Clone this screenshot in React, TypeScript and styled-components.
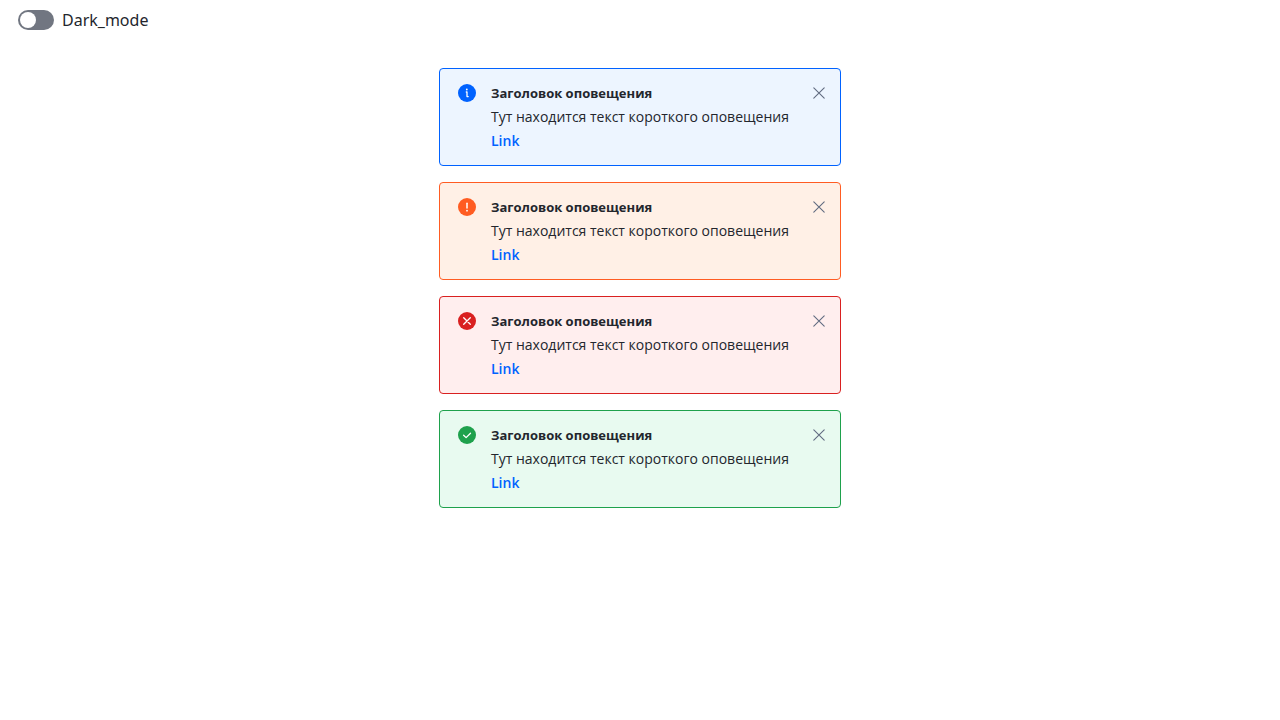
import React, { useState } from "react";
import styled, { createGlobalStyle } from "styled-components";

const GlobalStyle = createGlobalStyle<{ $dark: boolean }>`
  body {
    margin: 0;
    background: ${(p) => (p.$dark ? "#1f232e" : "#ffffff")};
    color: ${(p) => (p.$dark ? "#ffffff" : "#23262d")};
    font-family: "Noto Sans", sans-serif;
  }
`;

const Page = styled.main`
  padding: 8px 18px;
`;

const SwitchLabel = styled.label`
  display: flex;
  align-items: center;
  gap: 8px;
  width: fit-content;
  font-size: 16px;
  line-height: 24px;
  cursor: pointer;
`;

const Switch = styled.input`
  appearance: none;
  display: flex;
  align-items: center;
  box-sizing: border-box;
  width: 36px;
  height: 20px;
  margin: 0;
  padding: 2px;
  border-radius: 10px;
  background: #717681;
  cursor: pointer;

  &::before {
    content: "";
    width: 16px;
    height: 16px;
    border-radius: 50%;
    background: #ffffff;
  }

  &:checked {
    justify-content: flex-end;
    background: #0062ff;
  }
`;

const AlertList = styled.section`
  display: flex;
  flex-direction: column;
  gap: 16px;
  max-width: 402px;
  margin: 36px auto 0;
`;

const Alert = styled.article<{ $color: string; $background: string }>`
  display: flex;
  align-items: flex-start;
  gap: 12px;
  padding: 12px 9px 12px 15px;
  border: 1px solid ${(p) => p.$color};
  border-radius: 4px;
  background: ${(p) => p.$background};
  color: #23262d;
`;

const StatusIcon = styled.svg`
  flex: none;
  width: 24px;
  height: 24px;
`;

const AlertBody = styled.div`
  flex: 1;
  font-family: "Open Sans", "Noto Sans", sans-serif;
  font-size: 14px;
  line-height: 24px;
`;

const AlertTitle = styled.h2`
  margin: 0;
  font-size: 13px;
  font-weight: 700;
`;

const AlertText = styled.p`
  margin: 0;
`;

const AlertLink = styled.a`
  display: block;
  width: fit-content;
  color: #0062ff;
  font-weight: 600;
  text-decoration: none;
`;

const CloseButton = styled.button`
  display: flex;
  width: 24px;
  height: 24px;
  padding: 0;
  border: 0;
  background: none;
  color: #616b80;
  cursor: pointer;
`;

const white = { fill: "none", stroke: "#ffffff", strokeLinecap: "round", strokeLinejoin: "round" } as const;

const alerts = [
  {
    kind: "info",
    color: "#0062ff",
    background: "#edf5ff",
    glyph: (
      <>
        <circle cx="11.8" cy="8.5" r="0.9" fill="#ffffff" />
        <path d="M11.3 11h0.7v4.6h1.2" {...white} strokeWidth="1.3" />
      </>
    ),
  },
  {
    kind: "warning",
    color: "#ff5c22",
    background: "#fff0e6",
    glyph: (
      <>
        <path d="M12 8.2v4.8" {...white} strokeWidth="1.5" />
        <circle cx="12" cy="15.7" r="0.9" fill="#ffffff" />
      </>
    ),
  },
  {
    kind: "error",
    color: "#d92020",
    background: "#ffeeee",
    glyph: <path d="m8.7 8.7 6.6 6.6m0-6.6-6.6 6.6" {...white} strokeWidth="1.3" />,
  },
  {
    kind: "success",
    color: "#1ea14c",
    background: "#e8faf0",
    glyph: <path d="m8.6 12.2 2.5 2.4 4.4-4.4" {...white} strokeWidth="1.3" />,
  },
];

export default function App() {
  const [dark, setDark] = useState(false);
  const [closed, setClosed] = useState<string[]>([]);

  return (
    <Page>
      <GlobalStyle $dark={dark} />
      <SwitchLabel>
        <Switch type="checkbox" role="switch" checked={dark} onChange={() => setDark(!dark)} />
        Dark_mode
      </SwitchLabel>
      <AlertList>
        {alerts
          .filter((a) => !closed.includes(a.kind))
          .map((a) => (
            <Alert key={a.kind} $color={a.color} $background={a.background}>
              <StatusIcon viewBox="0 0 24 24" aria-hidden="true">
                <circle cx="12" cy="12" r="9" fill={a.color} />
                {a.glyph}
              </StatusIcon>
              <AlertBody>
                <AlertTitle>Заголовок оповещения</AlertTitle>
                <AlertText>Тут находится текст короткого оповещения</AlertText>
                <AlertLink href="#">Link</AlertLink>
              </AlertBody>
              <CloseButton type="button" aria-label="Закрыть" onClick={() => setClosed([...closed, a.kind])}>
                <svg width="24" height="24" viewBox="0 0 24 24" aria-hidden="true">
                  <path d="m6.8 6.8 10.4 10.4m0-10.4-10.4 10.4" fill="none" stroke="currentColor" strokeWidth="1.1" strokeLinecap="round" />
                </svg>
              </CloseButton>
            </Alert>
          ))}
      </AlertList>
    </Page>
  );
}
